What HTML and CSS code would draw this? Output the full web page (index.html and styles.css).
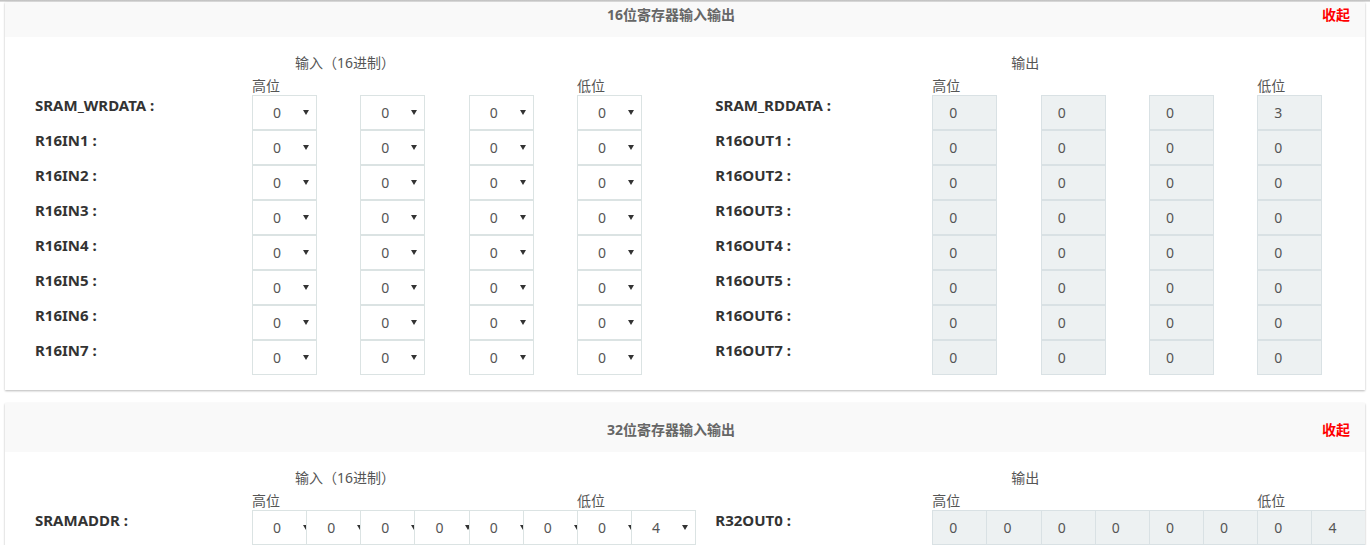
FILE: index.html
```html
<!DOCTYPE html>
<html lang="zh-CN">
<head>
<meta charset="utf-8">
<title>寄存器输入输出</title>
<link rel="stylesheet" href="styles.css">
</head>
<body>
<div class="edge"></div>

<section class="panel">
  <div class="panel-head first">
    <div class="panel-title">16位寄存器输入输出</div>
    <a class="fold">收起</a>
  </div>
  <div class="panel-body">
    <div class="io">
      <div class="section">
        <div class="cap cap-in">输入（16进制）</div>
        <div class="hilo"><span class="hi">高位</span><span class="lo">低位</span></div>
        <div class="lbl">SRAM_WRDATA :</div>
        <div class="boxes"><div class="cell"><div class="sel"><span class="v">0</span><i class="arr"></i></div></div><div class="cell"><div class="sel"><span class="v">0</span><i class="arr"></i></div></div><div class="cell"><div class="sel"><span class="v">0</span><i class="arr"></i></div></div><div class="cell"><div class="sel"><span class="v">0</span><i class="arr"></i></div></div></div>
        <div class="lbl">R16IN1 :</div>
        <div class="boxes"><div class="cell"><div class="sel"><span class="v">0</span><i class="arr"></i></div></div><div class="cell"><div class="sel"><span class="v">0</span><i class="arr"></i></div></div><div class="cell"><div class="sel"><span class="v">0</span><i class="arr"></i></div></div><div class="cell"><div class="sel"><span class="v">0</span><i class="arr"></i></div></div></div>
        <div class="lbl">R16IN2 :</div>
        <div class="boxes"><div class="cell"><div class="sel"><span class="v">0</span><i class="arr"></i></div></div><div class="cell"><div class="sel"><span class="v">0</span><i class="arr"></i></div></div><div class="cell"><div class="sel"><span class="v">0</span><i class="arr"></i></div></div><div class="cell"><div class="sel"><span class="v">0</span><i class="arr"></i></div></div></div>
        <div class="lbl">R16IN3 :</div>
        <div class="boxes"><div class="cell"><div class="sel"><span class="v">0</span><i class="arr"></i></div></div><div class="cell"><div class="sel"><span class="v">0</span><i class="arr"></i></div></div><div class="cell"><div class="sel"><span class="v">0</span><i class="arr"></i></div></div><div class="cell"><div class="sel"><span class="v">0</span><i class="arr"></i></div></div></div>
        <div class="lbl">R16IN4 :</div>
        <div class="boxes"><div class="cell"><div class="sel"><span class="v">0</span><i class="arr"></i></div></div><div class="cell"><div class="sel"><span class="v">0</span><i class="arr"></i></div></div><div class="cell"><div class="sel"><span class="v">0</span><i class="arr"></i></div></div><div class="cell"><div class="sel"><span class="v">0</span><i class="arr"></i></div></div></div>
        <div class="lbl">R16IN5 :</div>
        <div class="boxes"><div class="cell"><div class="sel"><span class="v">0</span><i class="arr"></i></div></div><div class="cell"><div class="sel"><span class="v">0</span><i class="arr"></i></div></div><div class="cell"><div class="sel"><span class="v">0</span><i class="arr"></i></div></div><div class="cell"><div class="sel"><span class="v">0</span><i class="arr"></i></div></div></div>
        <div class="lbl">R16IN6 :</div>
        <div class="boxes"><div class="cell"><div class="sel"><span class="v">0</span><i class="arr"></i></div></div><div class="cell"><div class="sel"><span class="v">0</span><i class="arr"></i></div></div><div class="cell"><div class="sel"><span class="v">0</span><i class="arr"></i></div></div><div class="cell"><div class="sel"><span class="v">0</span><i class="arr"></i></div></div></div>
        <div class="lbl">R16IN7 :</div>
        <div class="boxes"><div class="cell"><div class="sel"><span class="v">0</span><i class="arr"></i></div></div><div class="cell"><div class="sel"><span class="v">0</span><i class="arr"></i></div></div><div class="cell"><div class="sel"><span class="v">0</span><i class="arr"></i></div></div><div class="cell"><div class="sel"><span class="v">0</span><i class="arr"></i></div></div></div>
      </div>

      <div class="section">
        <div class="cap cap-out">输出</div>
        <div class="hilo"><span class="hi">高位</span><span class="lo">低位</span></div>
        <div class="lbl">SRAM_RDDATA :</div>
        <div class="boxes"><div class="cell"><div class="out">0</div></div><div class="cell"><div class="out">0</div></div><div class="cell"><div class="out">0</div></div><div class="cell"><div class="out">3</div></div></div>
        <div class="lbl">R16OUT1 :</div>
        <div class="boxes"><div class="cell"><div class="out">0</div></div><div class="cell"><div class="out">0</div></div><div class="cell"><div class="out">0</div></div><div class="cell"><div class="out">0</div></div></div>
        <div class="lbl">R16OUT2 :</div>
        <div class="boxes"><div class="cell"><div class="out">0</div></div><div class="cell"><div class="out">0</div></div><div class="cell"><div class="out">0</div></div><div class="cell"><div class="out">0</div></div></div>
        <div class="lbl">R16OUT3 :</div>
        <div class="boxes"><div class="cell"><div class="out">0</div></div><div class="cell"><div class="out">0</div></div><div class="cell"><div class="out">0</div></div><div class="cell"><div class="out">0</div></div></div>
        <div class="lbl">R16OUT4 :</div>
        <div class="boxes"><div class="cell"><div class="out">0</div></div><div class="cell"><div class="out">0</div></div><div class="cell"><div class="out">0</div></div><div class="cell"><div class="out">0</div></div></div>
        <div class="lbl">R16OUT5 :</div>
        <div class="boxes"><div class="cell"><div class="out">0</div></div><div class="cell"><div class="out">0</div></div><div class="cell"><div class="out">0</div></div><div class="cell"><div class="out">0</div></div></div>
        <div class="lbl">R16OUT6 :</div>
        <div class="boxes"><div class="cell"><div class="out">0</div></div><div class="cell"><div class="out">0</div></div><div class="cell"><div class="out">0</div></div><div class="cell"><div class="out">0</div></div></div>
        <div class="lbl">R16OUT7 :</div>
        <div class="boxes"><div class="cell"><div class="out">0</div></div><div class="cell"><div class="out">0</div></div><div class="cell"><div class="out">0</div></div><div class="cell"><div class="out">0</div></div></div>
      </div>
    </div>
  </div>
</section>

<section class="panel">
  <div class="panel-head">
    <div class="panel-title">32位寄存器输入输出</div>
    <a class="fold">收起</a>
  </div>
  <div class="panel-body">
    <div class="io">
      <div class="section">
        <div class="cap cap-in">输入（16进制）</div>
        <div class="hilo"><span class="hi">高位</span><span class="lo">低位</span></div>
        <div class="lbl">SRAMADDR :</div>
        <div class="boxes eight"><div class="cell"><div class="sel"><span class="v">0</span><i class="arr"></i></div></div><div class="cell"><div class="sel"><span class="v">0</span><i class="arr"></i></div></div><div class="cell"><div class="sel"><span class="v">0</span><i class="arr"></i></div></div><div class="cell"><div class="sel"><span class="v">0</span><i class="arr"></i></div></div><div class="cell"><div class="sel"><span class="v">0</span><i class="arr"></i></div></div><div class="cell"><div class="sel"><span class="v">0</span><i class="arr"></i></div></div><div class="cell"><div class="sel"><span class="v">0</span><i class="arr"></i></div></div><div class="cell"><div class="sel"><span class="v">4</span><i class="arr"></i></div></div></div>
      </div>
      <div class="section">
        <div class="cap cap-out">输出</div>
        <div class="hilo"><span class="hi">高位</span><span class="lo">低位</span></div>
        <div class="lbl">R32OUT0 :</div>
        <div class="boxes eight"><div class="cell"><div class="out">0</div></div><div class="cell"><div class="out">0</div></div><div class="cell"><div class="out">0</div></div><div class="cell"><div class="out">0</div></div><div class="cell"><div class="out">0</div></div><div class="cell"><div class="out">0</div></div><div class="cell"><div class="out">0</div></div><div class="cell"><div class="out">4</div></div></div>
      </div>
    </div>
  </div>
</section>
</body>
</html>
```

FILE: styles.css
```css
html, body {
  margin: 0;
  padding: 0;
  background: #fff;
  font-family: "Noto Sans", "Noto Sans CJK SC", sans-serif;
  font-size: 14px;
  color: #555;
}

.edge {
  height: 2px;
  background: linear-gradient(#b9b9b9, #e6e6e6);
}

.panel {
  margin: 0 5px 13px;
  background: #fff;
  overflow: hidden;
  box-shadow: 0 1px 2px rgba(0, 0, 0, 0.28);
}

.panel-head {
  display: flex;
  align-items: flex-start;
  background: #f9f9f9;
  height: 49px;
  box-sizing: border-box;
  padding-top: 17px;
}
.panel-head.first {
  height: 35px;
  padding-top: 3px;
}

.panel-title {
  flex: 1;
  text-align: center;
  padding-left: 15px;
  line-height: 20px;
  font-size: 14px;
  font-weight: bold;
  color: #666;
}

.fold {
  width: 28px;
  margin-right: 15px;
  line-height: 20px;
  font-size: 14px;
  font-weight: bold;
  color: #f00;
  cursor: pointer;
}

.panel-body {
  padding: 15px 0 15px 30px;
}

.io {
  display: flex;
  gap: 30px;
}

.section {
  display: grid;
  grid-template-columns: 217px 433.33px;
  grid-template-rows: 22px 21px;
  grid-auto-rows: 35px;
}

.cap {
  grid-column: 1 / 3;
  line-height: 22px;
  color: #555;
}
.cap-in { padding-left: 260px; }
.cap-out { padding-left: 296px; }

.hilo {
  grid-column: 1 / 3;
  margin-top: 3px;
  line-height: 18px;
  display: grid;
  grid-template-columns: 217px repeat(4, 108.33px);
  color: #555;
}
.hilo .hi { grid-column: 2; }
.hilo .lo { grid-column: 5; }

.lbl {
  grid-column: 1;
  line-height: 20px;
  font-size: 15px;
  font-weight: bold;
  color: #333;
  white-space: pre;
}

.boxes {
  grid-column: 2;
  display: flex;
}
.cell {
  width: 108.33px;
  flex: none;
  position: relative;
}
.eight .cell { width: 54.166px; }

.sel, .out {
  width: 65px;
  height: 35px;
  box-sizing: border-box;
  border: 1px solid #dbe3e3;
}

.sel {
  display: flex;
  align-items: center;
  background: #fff;
}
.sel .v {
  padding-left: 20px;
  color: #555;
}
.sel .arr {
  margin-left: auto;
  margin-right: 7px;
  width: 0;
  height: 0;
  border-left: 3px solid transparent;
  border-right: 3px solid transparent;
  border-top: 5px solid #333;
}

.out {
  background: #edf1f2;
  border-color: #d9e1e4;
  padding-left: 16px;
  line-height: 33px;
  color: #555;
}
```
